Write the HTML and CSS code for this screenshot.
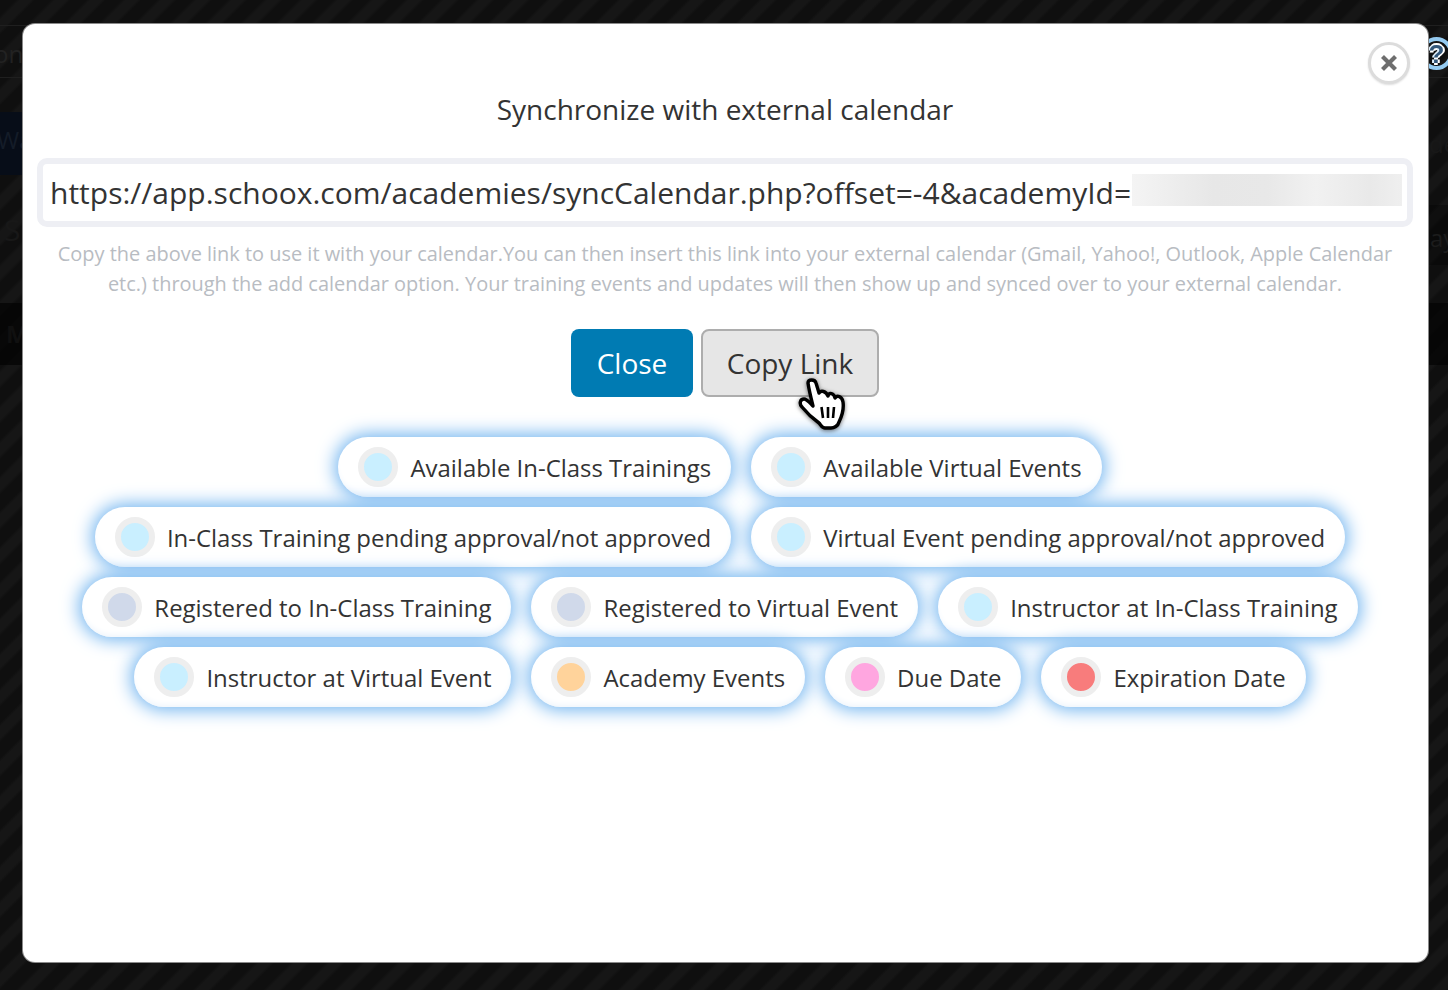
FILE: index.html
```html
<!DOCTYPE html>
<html lang="en">
<head>
	<meta charset="UTF-8">
	<title>Synchronize with external calendar</title>
	<link rel="stylesheet" href="styles.css">
</head>
<body>
	<!-- dimmed page behind the modal -->
	<div class="behind">
		<div class="behind-line behind-line1"></div>
		<div class="behind-line behind-line2"></div>
		<div class="behind-band behind-band1"></div>
		<div class="behind-band behind-band2"></div>
		<div class="behind-band behind-band3"></div>
		<div class="behind-word behind-on">on</div>
		<div class="behind-word behind-wa">Wa</div>
		<div class="behind-word behind-s">S</div>
		<div class="behind-word behind-m">M</div>
		<div class="behind-word behind-de">de</div>
		<div class="behind-word behind-ay">ay</div>
	</div>

	<div class="help">?</div>

	<div class="modal">
		<button class="modal-x" type="button">
			<svg width="20" height="20" viewBox="0 0 20 20"><path d="M3.5 3.5L16.5 16.5M16.5 3.5L3.5 16.5" stroke="#6e6e6e" stroke-width="4.2" fill="none"/></svg>
		</button>
		<h2 class="modal-title">Synchronize with external calendar</h2>
		<div class="link-box">
			<span class="link-text">https://app.schoox.com/academies/syncCalendar.php?offset=-4&amp;academyId=</span>
			<span class="link-blur"></span>
		</div>
		<p class="hint">Copy the above link to use it with your calendar.You can then insert this link into your external calendar (Gmail, Yahoo!, Outlook, Apple Calendar etc.) through the add calendar option. Your training events and updates will then show up and synced over to your external calendar.</p>
		<div class="buttons">
			<button class="btn btn-blue" type="button">Close</button>
			<button class="btn btn-grey" type="button">Copy Link
				<svg class="hand" width="50" height="56" viewBox="0 0 50 56">
					<path d="M10 7C10 3 17 3 18 7L21 17C23 14 28 15 30 20C31 16 36 17 37 22C39 19 44 20 45 26C46 33 44 40 41 46C40 50 36 52 33 52H27C24 52 23 49 21 47C14 42 8 36 4 31C1 28 2 23 6 23C9 23 12 27 15 30C13 22 11 14 10 7Z" fill="#fff" stroke="#000" stroke-width="3.4" stroke-linejoin="round"/>
					<path d="M23.5 31L25 42M30 31V42M36 31L35 42" stroke="#000" stroke-width="2.6" fill="none"/>
				</svg>
			</button>
		</div>
		<ul class="legend">
			<li class="pill"><i class="dot dot-blue"></i>Available In-Class Trainings</li>
			<li class="pill"><i class="dot dot-blue"></i>Available Virtual Events</li>
			<li class="pill"><i class="dot dot-blue"></i>In-Class Training pending approval/not approved</li>
			<li class="pill"><i class="dot dot-blue"></i>Virtual Event pending approval/not approved</li>
			<li class="pill"><i class="dot dot-slate"></i>Registered to In-Class Training</li>
			<li class="pill"><i class="dot dot-slate"></i>Registered to Virtual Event</li>
			<li class="pill"><i class="dot dot-blue"></i>Instructor at In-Class Training</li>
			<li class="pill"><i class="dot dot-blue"></i>Instructor at Virtual Event</li>
			<li class="pill"><i class="dot dot-orange"></i>Academy Events</li>
			<li class="pill"><i class="dot dot-pink"></i>Due Date</li>
			<li class="pill"><i class="dot dot-red"></i>Expiration Date</li>
		</ul>
	</div>
</body>
</html>
```

FILE: styles.css
```css
*{margin: 0;padding: 0;box-sizing: border-box;}
html,body{height: 990px;overflow: hidden;}
body{
	padding: 24px 20px 28px 23px;
	position: relative;
	font-family: "Open Sans", "Liberation Sans", sans-serif;
	color: #333;
	background-color: #121212;
	background-image: repeating-linear-gradient(135deg, #0f0f0f 0, #0f0f0f 11px, #161616 14px, #161616 22px, #0f0f0f 25px);
}

/* page behind the overlay */
.behind-line{position: absolute;left: 0;width: 100%;height: 1px;background: #1f1f1f;}
.behind-line1{top: 25px;}
.behind-line2{top: 77px;}
.behind-band{position: absolute;left: 0;}
.behind-band1{top: 112px;width: 23px;height: 63px;background: #070d18;}
.behind-band2{top: 205px;left: 1428px;width: 20px;height: 60px;background: rgba(0,0,0,.3);}
.behind-band3{top: 303px;width: 100%;height: 62px;background: rgba(0,0,0,.6);}
.behind-word{position: absolute;color: #222;font-size: 24px;line-height: 32px;}
.behind-on{left: -6px;top: 38px;}
.behind-wa{left: -3px;top: 124px;color: #141c28;}
.behind-s{left: 4px;top: 214px;color: #181818;font-size: 30px;}
.behind-m{left: 6px;top: 318px;color: #101010;font-weight: 700;}
.behind-de{left: 1429px;top: 128px;color: #181818;}
.behind-ay{left: 1430px;top: 222px;color: #1c1c1c;}

.help{
	position: absolute;
	left: 1420px;
	top: 37px;
	width: 33px;
	height: 33px;
	border: 4px solid #94caf0;
	border-radius: 50%;
	color: #33577a;
	font: bold 26px/26px "Liberation Sans", sans-serif;
	text-align: center;
	text-shadow: 2px 0 0 #fff, -2px 0 0 #dfeefa, 0 2px 0 #fff, 0 -2px 0 #fff;
	filter: blur(.5px);
}

.modal{
	position: relative;
	height: 938px;
	padding: 68px 15px 0 14px;
	background: #fff;
	border-radius: 12px;
	box-shadow: 0 0 0 1px #8a8a8a;
	text-align: center;
}
.modal-x{
	position: absolute;
	right: 18px;
	top: 18px;
	width: 42px;
	height: 42px;
	display: flex;
	align-items: center;
	justify-content: center;
	background: #fff;
	border: 3px solid #dcdcdc;
	border-radius: 50%;
	box-shadow: 0 1px 2px #ddd;
}
.modal-x svg{filter: blur(.6px);}
.modal-title{font-size: 28px;line-height: 34px;font-weight: 400;margin-bottom: 32px;}

.link-box{
	display: flex;
	align-items: center;
	height: 69px;
	padding: 0 5px 0 7px;
	border: 6px solid #eeeff4;
	border-radius: 10px;
	background: #fff;
}
.link-text{font-size: 30px;white-space: nowrap;color: #333;}
.link-blur{
	flex: 1;
	height: 32px;
	margin: 0 0 6px 1px;
	background: linear-gradient(90deg, #f4f4f4 0, #e7e7e7 30%, #e8e8e8 50%, #f1f1f1 68%, #e9e9e9 88%, #efefef 100%);
}

.hint{font-size: 19.95px;line-height: 30px;color: #b8bcc2;margin-top: 12px;}

.buttons{display: flex;justify-content: center;gap: 8px;margin: 30px 0 40px;}
.btn{
	position: relative;
	height: 68px;
	font-family: inherit;
	font-size: 28px;
	border-radius: 8px;
}
.btn-blue{width: 122px;background: #007bb3;color: #fff;border: 0;}
.btn-grey{width: 178px;background: #e6e6e6;color: #333;border: 2px solid #adadad;}
.hand{position: absolute;left: 95px;top: 45px;filter: drop-shadow(0 1px 2px rgba(0,0,0,.55));}

.legend{
	list-style: none;
	display: flex;
	flex-wrap: wrap;
	justify-content: center;
	gap: 10px 20px;
	margin-right: 10px;
}
.pill{
	display: flex;
	align-items: center;
	gap: 12px;
	height: 60px;
	padding: 0 20px;
	background: #fff;
	border-radius: 30px;
	font-size: 23.95px;
	color: #333;
	box-shadow: 0 0 18px 3px #6fb3ef, inset 0 -5px 6px -3px #eef5fc;
}
.dot{width: 40px;height: 40px;border: 6px solid #eee;border-radius: 50%;}
.dot-blue{background: #c9efff;}
.dot-slate{background: #d0d9ea;}
.dot-orange{background: #ffd39b;}
.dot-pink{background: #ffa6e0;}
.dot-red{background: #f87c7c;}
```
